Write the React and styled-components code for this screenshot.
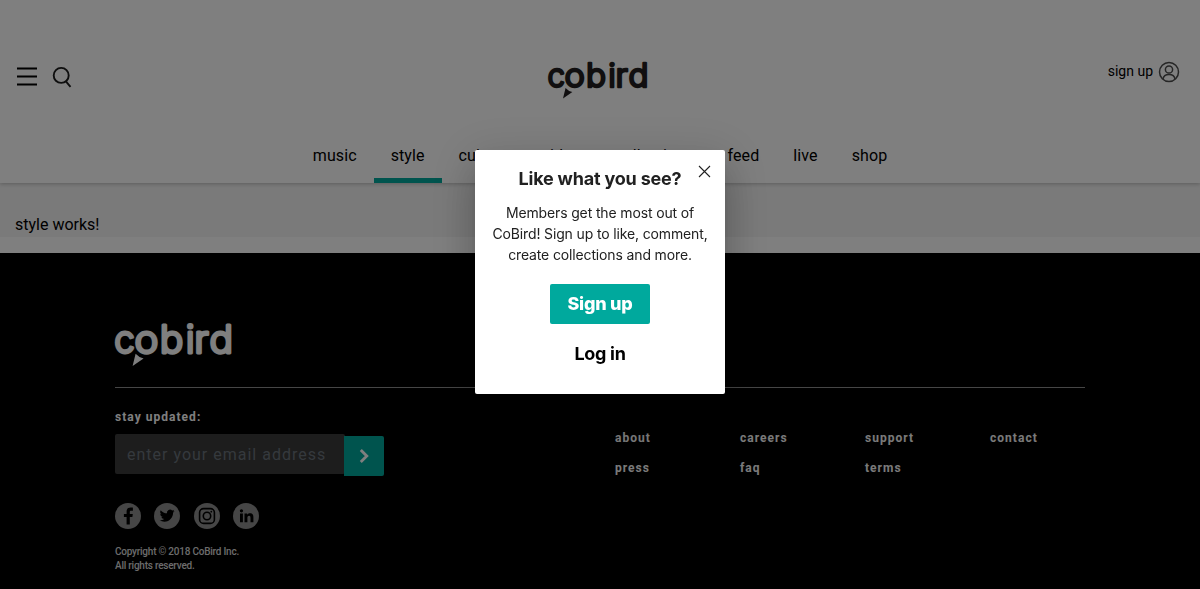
import React from 'react';
import styled, { createGlobalStyle } from 'styled-components';

const GlobalStyle = createGlobalStyle`
  * { box-sizing: border-box; }
  html, body { margin: 0; height: 100%; }
  body { background: #fff; color: #000; font-family: Roboto, sans-serif; overflow: hidden; }
  a { color: inherit; text-decoration: none; }
  button { border: 0; background: none; padding: 0; font: inherit; cursor: pointer; }
`;

const Page = styled.div`
  display: flex;
  flex-direction: column;
  height: 589px;
`;

const Header = styled.header`
  display: flex;
  flex-direction: column;
  justify-content: space-between;
  height: 183px;
  flex: none;
  background: #fff;
  box-shadow: 0 1px 4px rgba(0, 0, 0, 0.24);
  z-index: 1;
`;

const TopBar = styled.div`
  display: grid;
  grid-template-columns: 1fr auto 1fr;
  align-items: start;
  padding: 61px 20px 0 16px;
`;

const Tools = styled.div`
  display: flex;
  gap: 14px;
  padding-top: 5px;
`;

const Account = styled.a`
  display: flex;
  align-items: center;
  justify-content: flex-end;
  gap: 5px;
  height: 21px;
  font-size: 14px;
  line-height: 21px;
`;

const Nav = styled.nav`
  display: flex;
  justify-content: center;
`;

const Tab = styled.a`
  height: 45px;
  padding: 7px 17px 0;
  font-size: 16px;
  line-height: 22px;
  letter-spacing: 0.1px;
  border-bottom: 5px solid ${(p) => (p.$active ? '#00a99d' : 'transparent')};
`;

const Content = styled.main`
  height: 54px;
  flex: none;
  padding: 31px 15px 0;
  margin-bottom: 16px;
  background: #f4f4f4;
  font-size: 16px;
  line-height: 22px;
`;

const Footer = styled.footer`
  flex: 1;
  padding: 69px 115px 0;
  background: #000;
  color: #fff;
`;

const FooterBrand = styled.div`
  display: flex;
  height: 66px;
  border-bottom: 1px solid #8c8c8c;
`;

const FooterBody = styled.div`
  display: flex;
`;

const Subscribe = styled.div`
  width: 500px;
  padding-top: 20px;
`;

const Label = styled.div`
  font-size: 12px;
  font-weight: 700;
  letter-spacing: 1.03px;
  line-height: 18px;
`;

const EmailForm = styled.form`
  display: flex;
  margin-top: 8px;
`;

const EmailInput = styled.input`
  width: 230px;
  height: 40px;
  margin-right: -1px;
  padding: 0 12px;
  border: 0;
  border-radius: 2px;
  background: #3a3a3a;
  font: 16px Roboto, sans-serif;
  letter-spacing: 1px;
  &::placeholder { color: #6a737a; opacity: 1; }
`;

const Submit = styled.button`
  display: flex;
  align-items: center;
  justify-content: center;
  width: 40px;
  height: 40px;
  margin-top: 2px;
  border-radius: 0 2px 2px 0;
  background: #00a99d;
`;

const Socials = styled.div`
  display: flex;
  gap: 13.3px;
  margin-top: 27px;
`;

const Social = styled.a`
  width: 26px;
  height: 26px;
  border-radius: 50%;
  background: #8c8c8c;
  svg { display: block; }
`;

const Copyright = styled.p`
  margin: 16px 0 0;
  font-size: 10px;
  font-weight: 500;
  letter-spacing: -0.23px;
  line-height: 14px;
  color: #d8d8d8;
`;

const Links = styled.div`
  display: grid;
  grid-template-columns: repeat(4, 125px);
  grid-auto-rows: 30px;
  align-content: start;
  width: 470px;
  padding-top: 35px;
  font-size: 12px;
  font-weight: 700;
  letter-spacing: 1.03px;
  line-height: 30px;
  color: #f4f4f4;
`;

const Overlay = styled.div`
  position: fixed;
  inset: 0;
  z-index: 10;
  display: flex;
  align-items: flex-start;
  justify-content: center;
  padding-top: 150px;
  background: rgba(0, 0, 0, 0.5);
`;

const Dialog = styled.section`
  position: relative;
  display: flex;
  flex-direction: column;
  align-items: center;
  width: 250px;
  height: 244px;
  padding: 16px 15px 0;
  border-radius: 2px;
  background: #fff;
  color: #212121;
  box-shadow: 0 11px 15px -7px rgba(0, 0, 0, 0.2), 0 24px 38px 3px rgba(0, 0, 0, 0.14),
    0 9px 46px 8px rgba(0, 0, 0, 0.12);
  font-family: Inter, sans-serif;
`;

const Close = styled.button`
  position: absolute;
  top: 15px;
  right: 14px;
  width: 13px;
  height: 13px;
  svg { display: block; }
`;

const Title = styled.h2`
  margin: 0;
  font-size: 18px;
  font-weight: 700;
  line-height: 26px;
  letter-spacing: -0.2px;
  white-space: nowrap;
`;

const Message = styled.p`
  margin: 10px -5px 0;
  font-size: 14px;
  line-height: 21px;
  letter-spacing: -0.14px;
  text-align: center;
  white-space: pre-line;
`;

const Action = styled.button`
  width: 100px;
  height: 40px;
  margin-top: ${(p) => (p.$primary ? '19px' : '10px')};
  padding-bottom: 2px;
  border-radius: 2px;
  background: ${(p) => (p.$primary ? '#00a99d' : 'transparent')};
  color: ${(p) => (p.$primary ? '#fff' : '#000')};
  font-size: 18px;
  font-weight: ${(p) => (p.$primary ? 800 : 700)};
  letter-spacing: ${(p) => (p.$primary ? '-0.25px' : '-0.3px')};
`;

const Wordmark = styled.svg`
  display: block;
  overflow: visible;
  fill: ${(p) => p.$tone};
  stroke: ${(p) => p.$tone};
  stroke-width: 2.9;
  stroke-linejoin: round;
  font: 300 38px Inter, sans-serif;
`;

const letters = [
  { char: 'c', x: -0.7, stretch: 0.96 },
  { char: 'o', x: 19.4, stretch: 1.06 },
  { char: 'b', x: 44.7, stretch: 1.03 },
  { char: 'i', x: 70.7, stretch: 1 },
  { char: 'r', x: 79.3, stretch: 1.06 },
  { char: 'd', x: 94.6, stretch: 1.03 },
];

function Logo({ width, tone }) {
  return (
    <Wordmark $tone={tone} width={width} height={(width * 44) / 118} viewBox="0 0 118 44">
      {letters.map(({ char, x, stretch }) => (
        <text key={char} transform={`translate(${x} 31) scale(${stretch} 1)`}>{char}</text>
      ))}
      <path stroke="none" d="M20.6 31.8Q24 35.600 28.600 36.400L17.600 44Z" />
    </Wordmark>
  );
}

const tabs = ['music', 'style', 'culture', 'video', 'collections', 'feed', 'live', 'shop'];
const links = ['about', 'careers', 'support', 'contact', 'press', 'faq', 'terms'];

const socialIcons = {
  facebook: <path d="M14.8 21.5v-7.6h2.6l.4-3h-3V9.200c0-.9.3-1.400 1.500-1.400h1.600V4.700c-.3 0-1.200-.1-2.300-.1-2.400 0-4 1.400-4 4v2.300H8.900v3h2.700v7.600z" />,
  twitter: <path transform="translate(5.7 5.2) scale(.62)" d="M23.95 4.57a10 10 0 0 1-2.82.77 4.96 4.96 0 0 0 2.16-2.72c-.95.55-2 .95-3.13 1.18a4.92 4.92 0 0 0-8.38 4.48C7.69 8.1 4.07 6.13 1.64 3.16a4.92 4.92 0 0 0 1.52 6.57 4.9 4.9 0 0 1-2.23-.61v.06a4.92 4.92 0 0 0 3.95 4.83 5 5 0 0 1-2.21.08 4.94 4.94 0 0 0 4.6 3.42A9.87 9.87 0 0 1 0 19.54a13.99 13.99 0 0 0 7.55 2.21c9.05 0 14-7.5 14-13.98 0-.21 0-.42-.02-.63a9.94 9.94 0 0 0 2.46-2.55z" />,
  instagram: (
    <g fill="none" stroke="#000" strokeWidth="1.6">
      <rect x="5.6" y="5.6" width="14.8" height="14.8" rx="4" />
      <circle cx="13" cy="13" r="3.7" />
      <circle cx="17.3" cy="8.7" r=".9" fill="#000" stroke="none" />
    </g>
  ),
  linkedin: <path d="M7 10.600h2.900v8.600H7zM8.450 6.200a1.650 1.650 0 1 1 0 3.300 1.650 1.650 0 0 1 0-3.300M11.500 10.600h2.700v1.200c.4-.8 1.400-1.500 2.700-1.500 2.900 0 3.500 1.800 3.500 4.200v4.700h-2.900v-4.200c0-1 0-2.200-1.400-2.200s-1.700 1-1.700 2.200v4.200h-2.900z" />,
};

export default function App() {
  return (
    <>
      <GlobalStyle />
      <Page>
        <Header>
          <TopBar>
            <Tools>
              <svg width="22" height="22" viewBox="0 0 22 22" stroke="#000" strokeWidth="2">
                <path d="M1 2.5h20M1 10.5h20M1 18.5h20" />
              </svg>
              <svg width="22" height="22" viewBox="0 0 22 22" fill="none" stroke="#1c1c1c" strokeWidth="1.9">
                <circle cx="9.2" cy="9.4" r="7.5" />
                <path d="M13.7 15.2l4.800 5.600" />
              </svg>
            </Tools>
            <Logo width={100.5} tone="#231f20" />
            <Account href="#">
              sign up
              <svg width="22" height="22" viewBox="0 0 22 22" fill="none" stroke="#4d4d4d" strokeWidth="1.5">
                <circle cx="11" cy="11" r="9.5" />
                <circle cx="11" cy="8.5" r="3.6" />
                <path d="M5 18.100c.4-3 2.600-4.700 6-4.700s5.600 1.700 6 4.700" />
              </svg>
            </Account>
          </TopBar>
          <Nav>
            {tabs.map((t) => <Tab key={t} href="#" $active={t === 'style'}>{t}</Tab>)}
          </Nav>
        </Header>
        <Content>style works!</Content>
        <Footer>
          <FooterBrand><Logo width={118} tone="#fff" /></FooterBrand>
          <FooterBody>
            <Subscribe>
              <Label>stay updated:</Label>
              <EmailForm>
                <EmailInput placeholder="enter your email address" />
                <Submit type="button" aria-label="Subscribe">
                  <svg width="10" height="14" viewBox="0 0 10 14" fill="none" stroke="#fff" strokeWidth="2.8">
                    <path d="M1.800 1l6 6-6 6" />
                  </svg>
                </Submit>
              </EmailForm>
              <Socials>
                {Object.entries(socialIcons).map(([name, icon]) => (
                  <Social key={name} href="#" aria-label={name}>
                    <svg width="26" height="26" viewBox="0 0 26 26">{icon}</svg>
                  </Social>
                ))}
              </Socials>
              <Copyright>Copyright © 2018 CoBird Inc.<br />All rights reserved.</Copyright>
            </Subscribe>
            <Links>
              {links.map((l) => <a key={l} href="#">{l}</a>)}
            </Links>
          </FooterBody>
        </Footer>
      </Page>
      <Overlay>
        <Dialog role="dialog">
          <Close aria-label="Close">
            <svg width="13" height="13" viewBox="0 0 13 13" stroke="#212121" strokeWidth="1.1">
              <path d="M1 1l11 11M12 1L1 12" />
            </svg>
          </Close>
          <Title>Like what you see?</Title>
          <Message>{'Members get the most out of\nCoBird! Sign up to like, comment,\ncreate collections and more.'}</Message>
          <Action $primary>Sign up</Action>
          <Action>Log in</Action>
        </Dialog>
      </Overlay>
    </>
  );
}
